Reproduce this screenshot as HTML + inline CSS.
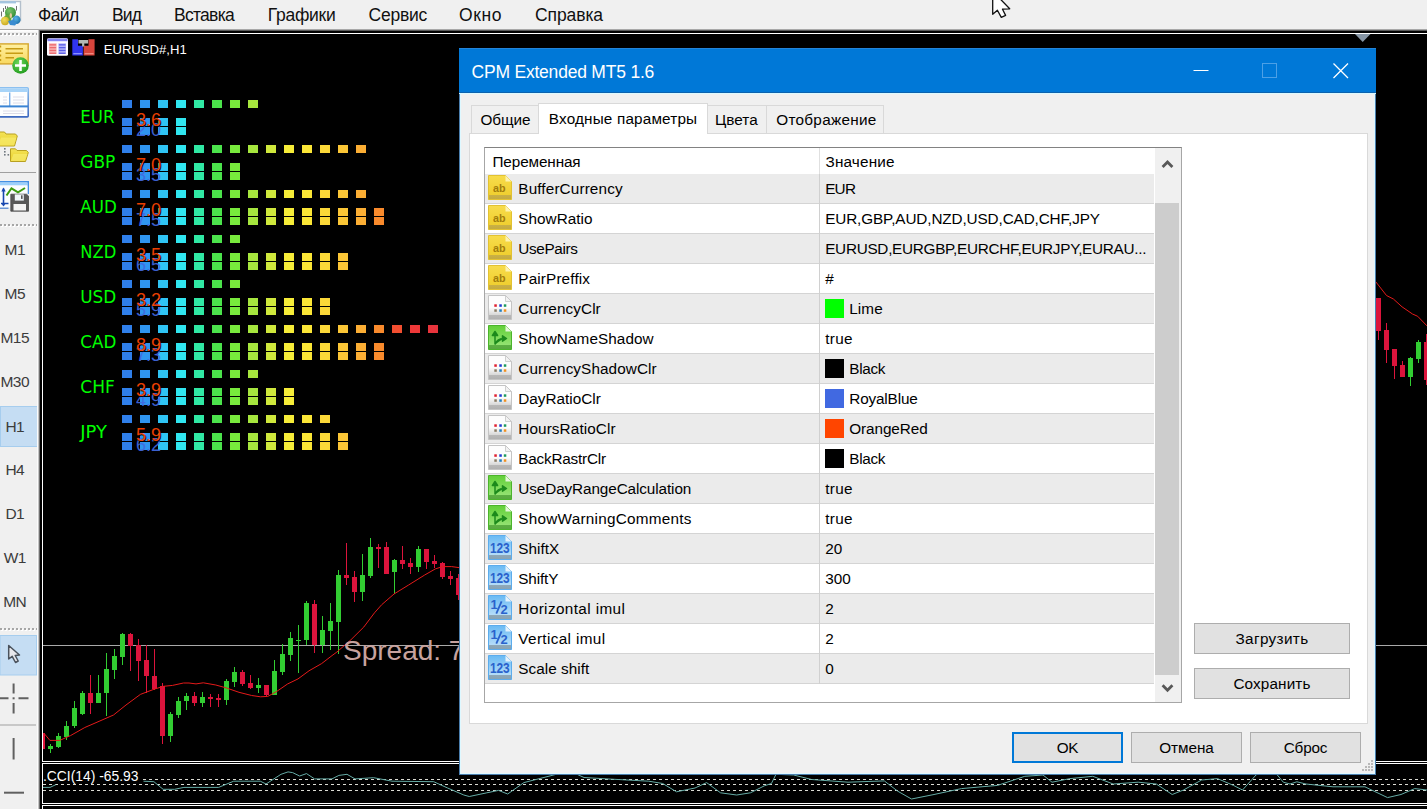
<!DOCTYPE html>
<html lang="ru"><head><meta charset="utf-8"><title>CPM Extended MT5 1.6</title>
<style>
html,body{margin:0;padding:0}
body{width:1427px;height:809px;overflow:hidden;background:#000;position:relative;font-family:"Liberation Sans",sans-serif;color:#000}
#chart{position:absolute;left:0;top:0;width:1427px;height:809px}
#chart text{font-family:"Liberation Sans",sans-serif}
#chart text.lv{font-size:18px;opacity:0.92}
#chart text.lb{font-family:"DejaVu Sans Condensed","DejaVu Sans",sans-serif;font-size:17.8px}
#menubar{position:absolute;left:0;top:0;width:1427px;height:29px;background:#f0f0f0;border-bottom:1px solid #a8a8a8}
#menubar:after{content:"";position:absolute;left:40px;right:0;top:30px;height:1px;background:#5a5a5a}
.mi{position:absolute;top:0;height:29px;line-height:30.5px;font-size:17.5px;color:#111;white-space:nowrap}
#appicon{position:absolute;left:0;top:0}
#cursor{position:absolute;left:985px;top:0}
#ltb{position:absolute;left:0;top:30px;width:38px;height:779px;background:#f0f0f0;border-right:1px solid #c4c4c4;box-shadow:1px 0 0 #6e6e6e}
#ltb:before{content:"";position:absolute;left:0;top:0;width:38px;height:2px;background:linear-gradient(#fff,#f8f8f8)}
#ltb:after{content:"";position:absolute;left:37px;top:0;width:1px;height:779px;background:#fbfbfb}
.tf{position:absolute;left:0;width:29px;height:42px;line-height:42px;font-size:15.5px;color:#3c3c3c;white-space:nowrap;letter-spacing:-0.6px}
.tf span{display:block;width:29.5px;text-align:center}
.tf.sel{width:36px;height:39px;line-height:39px;margin-top:1px;background:#c5ddf3;border:1px solid #a6cdee}
.tf.sel span{margin-left:-1px}
.grip{position:absolute;left:0;width:38px;height:3px;background:linear-gradient(#0000 0 0),repeating-linear-gradient(90deg,#a6a6a6 0 2px,transparent 2px 4px) 0 0/38px 2px no-repeat,repeating-linear-gradient(90deg,transparent 0 1px,#fff 1px 3px,transparent 3px 4px) 0 1px/38px 2px no-repeat}
.sep{position:absolute;left:0;width:36px;height:1px;background:#a0a0a0}
.lic{position:absolute;left:0}
#dlg{position:absolute;left:459px;top:48px;width:917px;height:727px;background:#f0f0f0;box-shadow:inset 0 0 0 1px #4a7eae,inset 0 0 0 2px #def8ff}
#ttl{position:absolute;left:0;top:0;width:917px;height:44px;background:#0078d7;border-bottom:1px solid #0d62ae;box-shadow:0 1px 0 #dcfaff,inset 0 1px 0 #2484da;color:#fff;font-size:17.5px;line-height:49px;white-space:nowrap}
#ttl span{position:absolute;left:12.5px;top:0}
#tbtn{position:absolute;left:734px;top:0}
#panel{position:absolute;left:10px;top:85px;width:897px;height:589px;background:#fff;border:1px solid #d9d9d9}
.tab{position:absolute;background:#f0f0f0;border:1px solid #d9d9d9;border-bottom:none;box-sizing:border-box;font-size:15.3px;white-space:nowrap}
.tab span{position:absolute;top:0;line-height:28px}
.tab.sel{background:#fff;z-index:2}
.tab.sel span{line-height:30px}
#list{position:absolute;left:25px;top:99px;width:696px;height:554px;background:#fff;border:1px solid #a6a6a6;border-top-color:#828282;font-size:15.3px;overflow:hidden}
.hd{position:relative;height:26px;line-height:27px;white-space:nowrap}
.hd .h1{position:absolute;left:7.5px}
.hd .h2{position:absolute;left:340.5px}
.hd:after{content:"";position:absolute;left:334px;top:0;width:1px;height:26px;background:#e0e0e0}
.row{position:relative;height:29px;width:668.5px;border-bottom:1px solid #d4d4d4;line-height:30.6px;white-space:nowrap;background:#fff}
.row.g{background:#ebebeb}
.row:after{content:"";position:absolute;left:334px;top:0;width:1px;height:30px;background:#d0d0d0}
.row svg{position:absolute;left:3px;top:1px}
.row svg text{font-family:"Liberation Sans",sans-serif}
.row .n{position:absolute;left:33.3px;top:0}
.row .v{position:absolute;left:340.2px;top:0}
.row .v.c{left:364.3px}
.sw{position:absolute;left:340.2px;top:5.3px;width:18.6px;height:18.6px;display:block}
#sb{position:absolute;left:670px;top:0;width:26px;height:554px;background:#f0f0f0}
#thumb{position:absolute;left:0;top:55px;width:24px;height:472px;background:#cdcdcd}
.btn{position:absolute;box-sizing:border-box;background:#e1e1e1;border:1px solid #adadad;font-size:15.3px;text-align:center;white-space:nowrap}
.btn span{display:block;line-height:29px}
.btn.def{border:2px solid #0078d7}
.btn.def span{line-height:27px}
#grip{position:absolute;left:903px;top:712px}
</style></head>
<body>
<svg width="0" height="0" style="position:absolute"><defs>
<linearGradient id="gAb" x1="0" y1="0" x2="0" y2="1"><stop offset="0" stop-color="#f7dc4c"/><stop offset="0.8" stop-color="#f0cf30"/><stop offset="0.82" stop-color="#c9b045"/><stop offset="1" stop-color="#c4aa40"/></linearGradient>
<linearGradient id="gC" x1="0" y1="0" x2="0" y2="1"><stop offset="0.5" stop-color="#fdfdfd"/><stop offset="0.8" stop-color="#d8d8d8"/><stop offset="0.82" stop-color="#b8b8b8"/><stop offset="1" stop-color="#b0b0b0"/></linearGradient>
<linearGradient id="gBo" x1="0" y1="0" x2="0" y2="1"><stop offset="0" stop-color="#62d038"/><stop offset="0.8" stop-color="#92e270"/><stop offset="0.82" stop-color="#5cb043"/><stop offset="1" stop-color="#58a840"/></linearGradient>
<linearGradient id="gI" x1="0" y1="0" x2="0" y2="1"><stop offset="0" stop-color="#68baf4"/><stop offset="0.8" stop-color="#b4dcf8"/><stop offset="0.82" stop-color="#8ea8b8"/><stop offset="1" stop-color="#88a2b2"/></linearGradient>
</defs></svg>
<svg id="chart" width="1427" height="809" viewBox="0 0 1427 809"><rect x="40" y="31" width="1387" height="778" fill="#000"/><g shape-rendering="crispEdges" fill="#fff"><rect x="42" y="33" width="1385" height="1"/><rect x="42" y="33" width="1" height="729"/><rect x="42" y="761" width="1385" height="1"/><rect x="42" y="763" width="1385" height="1"/><rect x="42" y="763" width="1" height="41"/><rect x="42" y="803" width="1385" height="1"/><rect x="42" y="805" width="1385" height="1"/><rect x="42" y="805" width="1" height="4"/></g><rect x="43" y="645" width="1384" height="1" fill="#a9a9a9" shape-rendering="crispEdges"/><path d="M1355 34H1370.5L1362.7 42Z" fill="#8796a5"/><g>
<rect x="47" y="38.3" width="21" height="17.5" rx="1.5" fill="#fdfbff"/>
<rect x="47.5" y="38.6" width="20" height="2.6" fill="#8484f2"/>
<rect x="49" y="43.3" width="7.6" height="10.7" fill="#f9b4b4"/><rect x="58.4" y="43.3" width="7.6" height="10.7" fill="#b6b6fa"/>
<g fill="#ec6a6e"><rect x="49.5" y="44.2" width="6.6" height="1.3"/><rect x="49.5" y="47" width="6.6" height="1.3"/><rect x="49.5" y="49.8" width="6.6" height="1.3"/><rect x="49.5" y="52.6" width="6.6" height="1.3"/></g>
<g fill="#5a5ee6"><rect x="58.9" y="44.2" width="6.6" height="1.3"/><rect x="58.9" y="47" width="6.6" height="1.3"/><rect x="58.9" y="49.8" width="6.6" height="1.3"/><rect x="58.9" y="52.6" width="6.6" height="1.3"/></g>
<path d="M72.3 39.200h5.700v6.600h4.900v9.800h-10.600z" fill="#3034ee"/>
<path d="M83.6 45.800h4.900v-6.600h6.100v16.400h-11z" fill="#d8453c"/>
<path d="M78.5 40h9.600v3.400h-3.800v3h-2.200v-3h-3.600z" fill="#b4b8b4"/>
<rect x="73.3" y="53" width="8.6" height="1.3" fill="#8a90ff"/><rect x="84.6" y="53" width="9" height="1.3" fill="#f08a80"/>
</g><text x="103.7" y="54" font-size="13" fill="#fff" textLength="83" lengthAdjust="spacingAndGlyphs">EURUSD#,H1</text><g shape-rendering="crispEdges"><rect x="122" y="100" width="10" height="8" fill="#2f7fea"/><rect x="140" y="100" width="10" height="8" fill="#2f95f0"/><rect x="158" y="100" width="10" height="8" fill="#2fc4f4"/><rect x="176" y="100" width="10" height="8" fill="#30e6f0"/><rect x="194" y="100" width="10" height="8" fill="#30e8a4"/><rect x="212" y="100" width="10" height="8" fill="#4be34b"/><rect x="230" y="100" width="10" height="8" fill="#78ea3c"/><rect x="248" y="100" width="10" height="8" fill="#a6e63e"/><rect x="122" y="118" width="10" height="8" fill="#2f7fea"/><rect x="122" y="127" width="10" height="8" fill="#2f7fea"/><rect x="140" y="118" width="10" height="8" fill="#2f95f0"/><rect x="140" y="127" width="10" height="8" fill="#2f95f0"/><rect x="158" y="118" width="10" height="8" fill="#2fc4f4"/><rect x="158" y="127" width="10" height="8" fill="#2fc4f4"/><rect x="176" y="118" width="10" height="8" fill="#30e6f0"/><rect x="176" y="127" width="10" height="8" fill="#30e6f0"/><rect x="122" y="145" width="10" height="8" fill="#2f7fea"/><rect x="140" y="145" width="10" height="8" fill="#2f95f0"/><rect x="158" y="145" width="10" height="8" fill="#2fc4f4"/><rect x="176" y="145" width="10" height="8" fill="#30e6f0"/><rect x="194" y="145" width="10" height="8" fill="#30e8a4"/><rect x="212" y="145" width="10" height="8" fill="#4be34b"/><rect x="230" y="145" width="10" height="8" fill="#78ea3c"/><rect x="248" y="145" width="10" height="8" fill="#a6e63e"/><rect x="266" y="145" width="10" height="8" fill="#cfe83c"/><rect x="284" y="145" width="10" height="8" fill="#f6ec38"/><rect x="302" y="145" width="10" height="8" fill="#fbe636"/><rect x="320" y="145" width="10" height="8" fill="#fbd838"/><rect x="338" y="145" width="10" height="8" fill="#fbc636"/><rect x="356" y="145" width="10" height="8" fill="#fbae34"/><rect x="122" y="163" width="10" height="8" fill="#2f7fea"/><rect x="122" y="172" width="10" height="8" fill="#2f7fea"/><rect x="140" y="163" width="10" height="8" fill="#2f95f0"/><rect x="140" y="172" width="10" height="8" fill="#2f95f0"/><rect x="158" y="163" width="10" height="8" fill="#2fc4f4"/><rect x="158" y="172" width="10" height="8" fill="#2fc4f4"/><rect x="176" y="163" width="10" height="8" fill="#30e6f0"/><rect x="176" y="172" width="10" height="8" fill="#30e6f0"/><rect x="194" y="163" width="10" height="8" fill="#30e8a4"/><rect x="194" y="172" width="10" height="8" fill="#30e8a4"/><rect x="212" y="163" width="10" height="8" fill="#4be34b"/><rect x="212" y="172" width="10" height="8" fill="#4be34b"/><rect x="230" y="163" width="10" height="8" fill="#78ea3c"/><rect x="230" y="172" width="10" height="8" fill="#78ea3c"/><rect x="122" y="190" width="10" height="8" fill="#2f7fea"/><rect x="140" y="190" width="10" height="8" fill="#2f95f0"/><rect x="158" y="190" width="10" height="8" fill="#2fc4f4"/><rect x="176" y="190" width="10" height="8" fill="#30e6f0"/><rect x="194" y="190" width="10" height="8" fill="#30e8a4"/><rect x="212" y="190" width="10" height="8" fill="#4be34b"/><rect x="230" y="190" width="10" height="8" fill="#78ea3c"/><rect x="248" y="190" width="10" height="8" fill="#a6e63e"/><rect x="266" y="190" width="10" height="8" fill="#cfe83c"/><rect x="284" y="190" width="10" height="8" fill="#f6ec38"/><rect x="302" y="190" width="10" height="8" fill="#fbe636"/><rect x="320" y="190" width="10" height="8" fill="#fbd838"/><rect x="338" y="190" width="10" height="8" fill="#fbc636"/><rect x="356" y="190" width="10" height="8" fill="#fbae34"/><rect x="122" y="208" width="10" height="8" fill="#2f7fea"/><rect x="122" y="217" width="10" height="8" fill="#2f7fea"/><rect x="140" y="208" width="10" height="8" fill="#2f95f0"/><rect x="140" y="217" width="10" height="8" fill="#2f95f0"/><rect x="158" y="208" width="10" height="8" fill="#2fc4f4"/><rect x="158" y="217" width="10" height="8" fill="#2fc4f4"/><rect x="176" y="208" width="10" height="8" fill="#30e6f0"/><rect x="176" y="217" width="10" height="8" fill="#30e6f0"/><rect x="194" y="208" width="10" height="8" fill="#30e8a4"/><rect x="194" y="217" width="10" height="8" fill="#30e8a4"/><rect x="212" y="208" width="10" height="8" fill="#4be34b"/><rect x="212" y="217" width="10" height="8" fill="#4be34b"/><rect x="230" y="208" width="10" height="8" fill="#78ea3c"/><rect x="230" y="217" width="10" height="8" fill="#78ea3c"/><rect x="248" y="208" width="10" height="8" fill="#a6e63e"/><rect x="248" y="217" width="10" height="8" fill="#a6e63e"/><rect x="266" y="208" width="10" height="8" fill="#cfe83c"/><rect x="266" y="217" width="10" height="8" fill="#cfe83c"/><rect x="284" y="208" width="10" height="8" fill="#f6ec38"/><rect x="284" y="217" width="10" height="8" fill="#f6ec38"/><rect x="302" y="208" width="10" height="8" fill="#fbe636"/><rect x="302" y="217" width="10" height="8" fill="#fbe636"/><rect x="320" y="208" width="10" height="8" fill="#fbd838"/><rect x="320" y="217" width="10" height="8" fill="#fbd838"/><rect x="338" y="208" width="10" height="8" fill="#fbc636"/><rect x="338" y="217" width="10" height="8" fill="#fbc636"/><rect x="356" y="208" width="10" height="8" fill="#fbae34"/><rect x="356" y="217" width="10" height="8" fill="#fbae34"/><rect x="374" y="208" width="10" height="8" fill="#f98a2c"/><rect x="374" y="217" width="10" height="8" fill="#f98a2c"/><rect x="122" y="235" width="10" height="8" fill="#2f7fea"/><rect x="140" y="235" width="10" height="8" fill="#2f95f0"/><rect x="158" y="235" width="10" height="8" fill="#2fc4f4"/><rect x="176" y="235" width="10" height="8" fill="#30e6f0"/><rect x="194" y="235" width="10" height="8" fill="#30e8a4"/><rect x="212" y="235" width="10" height="8" fill="#4be34b"/><rect x="230" y="235" width="10" height="8" fill="#78ea3c"/><rect x="122" y="253" width="10" height="8" fill="#2f7fea"/><rect x="122" y="262" width="10" height="8" fill="#2f7fea"/><rect x="140" y="253" width="10" height="8" fill="#2f95f0"/><rect x="140" y="262" width="10" height="8" fill="#2f95f0"/><rect x="158" y="253" width="10" height="8" fill="#2fc4f4"/><rect x="158" y="262" width="10" height="8" fill="#2fc4f4"/><rect x="176" y="253" width="10" height="8" fill="#30e6f0"/><rect x="176" y="262" width="10" height="8" fill="#30e6f0"/><rect x="194" y="253" width="10" height="8" fill="#30e8a4"/><rect x="194" y="262" width="10" height="8" fill="#30e8a4"/><rect x="212" y="253" width="10" height="8" fill="#4be34b"/><rect x="212" y="262" width="10" height="8" fill="#4be34b"/><rect x="230" y="253" width="10" height="8" fill="#78ea3c"/><rect x="230" y="262" width="10" height="8" fill="#78ea3c"/><rect x="248" y="253" width="10" height="8" fill="#a6e63e"/><rect x="248" y="262" width="10" height="8" fill="#a6e63e"/><rect x="266" y="253" width="10" height="8" fill="#cfe83c"/><rect x="266" y="262" width="10" height="8" fill="#cfe83c"/><rect x="284" y="253" width="10" height="8" fill="#f6ec38"/><rect x="284" y="262" width="10" height="8" fill="#f6ec38"/><rect x="302" y="253" width="10" height="8" fill="#fbe636"/><rect x="302" y="262" width="10" height="8" fill="#fbe636"/><rect x="320" y="253" width="10" height="8" fill="#fbd838"/><rect x="320" y="262" width="10" height="8" fill="#fbd838"/><rect x="338" y="253" width="10" height="8" fill="#fbc636"/><rect x="338" y="262" width="10" height="8" fill="#fbc636"/><rect x="122" y="280" width="10" height="8" fill="#2f7fea"/><rect x="140" y="280" width="10" height="8" fill="#2f95f0"/><rect x="158" y="280" width="10" height="8" fill="#2fc4f4"/><rect x="176" y="280" width="10" height="8" fill="#30e6f0"/><rect x="194" y="280" width="10" height="8" fill="#30e8a4"/><rect x="212" y="280" width="10" height="8" fill="#4be34b"/><rect x="230" y="280" width="10" height="8" fill="#78ea3c"/><rect x="122" y="298" width="10" height="8" fill="#2f7fea"/><rect x="122" y="307" width="10" height="8" fill="#2f7fea"/><rect x="140" y="298" width="10" height="8" fill="#2f95f0"/><rect x="140" y="307" width="10" height="8" fill="#2f95f0"/><rect x="158" y="298" width="10" height="8" fill="#2fc4f4"/><rect x="158" y="307" width="10" height="8" fill="#2fc4f4"/><rect x="176" y="298" width="10" height="8" fill="#30e6f0"/><rect x="176" y="307" width="10" height="8" fill="#30e6f0"/><rect x="194" y="298" width="10" height="8" fill="#30e8a4"/><rect x="194" y="307" width="10" height="8" fill="#30e8a4"/><rect x="212" y="298" width="10" height="8" fill="#4be34b"/><rect x="212" y="307" width="10" height="8" fill="#4be34b"/><rect x="230" y="298" width="10" height="8" fill="#78ea3c"/><rect x="230" y="307" width="10" height="8" fill="#78ea3c"/><rect x="248" y="298" width="10" height="8" fill="#a6e63e"/><rect x="248" y="307" width="10" height="8" fill="#a6e63e"/><rect x="266" y="298" width="10" height="8" fill="#cfe83c"/><rect x="266" y="307" width="10" height="8" fill="#cfe83c"/><rect x="284" y="298" width="10" height="8" fill="#f6ec38"/><rect x="284" y="307" width="10" height="8" fill="#f6ec38"/><rect x="302" y="298" width="10" height="8" fill="#fbe636"/><rect x="302" y="307" width="10" height="8" fill="#fbe636"/><rect x="320" y="298" width="10" height="8" fill="#fbd838"/><rect x="320" y="307" width="10" height="8" fill="#fbd838"/><rect x="122" y="325" width="10" height="8" fill="#2f7fea"/><rect x="140" y="325" width="10" height="8" fill="#2f95f0"/><rect x="158" y="325" width="10" height="8" fill="#2fc4f4"/><rect x="176" y="325" width="10" height="8" fill="#30e6f0"/><rect x="194" y="325" width="10" height="8" fill="#30e8a4"/><rect x="212" y="325" width="10" height="8" fill="#4be34b"/><rect x="230" y="325" width="10" height="8" fill="#78ea3c"/><rect x="248" y="325" width="10" height="8" fill="#a6e63e"/><rect x="266" y="325" width="10" height="8" fill="#cfe83c"/><rect x="284" y="325" width="10" height="8" fill="#f6ec38"/><rect x="302" y="325" width="10" height="8" fill="#fbe636"/><rect x="320" y="325" width="10" height="8" fill="#fbd838"/><rect x="338" y="325" width="10" height="8" fill="#fbc636"/><rect x="356" y="325" width="10" height="8" fill="#fbae34"/><rect x="374" y="325" width="10" height="8" fill="#f98a2c"/><rect x="392" y="325" width="10" height="8" fill="#f24e30"/><rect x="410" y="325" width="10" height="8" fill="#ee3838"/><rect x="428" y="325" width="10" height="8" fill="#e8343c"/><rect x="122" y="343" width="10" height="8" fill="#2f7fea"/><rect x="122" y="352" width="10" height="8" fill="#2f7fea"/><rect x="140" y="343" width="10" height="8" fill="#2f95f0"/><rect x="140" y="352" width="10" height="8" fill="#2f95f0"/><rect x="158" y="343" width="10" height="8" fill="#2fc4f4"/><rect x="158" y="352" width="10" height="8" fill="#2fc4f4"/><rect x="176" y="343" width="10" height="8" fill="#30e6f0"/><rect x="176" y="352" width="10" height="8" fill="#30e6f0"/><rect x="194" y="343" width="10" height="8" fill="#30e8a4"/><rect x="194" y="352" width="10" height="8" fill="#30e8a4"/><rect x="212" y="343" width="10" height="8" fill="#4be34b"/><rect x="212" y="352" width="10" height="8" fill="#4be34b"/><rect x="230" y="343" width="10" height="8" fill="#78ea3c"/><rect x="230" y="352" width="10" height="8" fill="#78ea3c"/><rect x="248" y="343" width="10" height="8" fill="#a6e63e"/><rect x="248" y="352" width="10" height="8" fill="#a6e63e"/><rect x="266" y="343" width="10" height="8" fill="#cfe83c"/><rect x="266" y="352" width="10" height="8" fill="#cfe83c"/><rect x="284" y="343" width="10" height="8" fill="#f6ec38"/><rect x="284" y="352" width="10" height="8" fill="#f6ec38"/><rect x="302" y="343" width="10" height="8" fill="#fbe636"/><rect x="302" y="352" width="10" height="8" fill="#fbe636"/><rect x="320" y="343" width="10" height="8" fill="#fbd838"/><rect x="320" y="352" width="10" height="8" fill="#fbd838"/><rect x="338" y="343" width="10" height="8" fill="#fbc636"/><rect x="338" y="352" width="10" height="8" fill="#fbc636"/><rect x="356" y="343" width="10" height="8" fill="#fbae34"/><rect x="356" y="352" width="10" height="8" fill="#fbae34"/><rect x="374" y="343" width="10" height="8" fill="#f98a2c"/><rect x="374" y="352" width="10" height="8" fill="#f98a2c"/><rect x="122" y="370" width="10" height="8" fill="#2f7fea"/><rect x="140" y="370" width="10" height="8" fill="#2f95f0"/><rect x="158" y="370" width="10" height="8" fill="#2fc4f4"/><rect x="176" y="370" width="10" height="8" fill="#30e6f0"/><rect x="194" y="370" width="10" height="8" fill="#30e8a4"/><rect x="212" y="370" width="10" height="8" fill="#4be34b"/><rect x="230" y="370" width="10" height="8" fill="#78ea3c"/><rect x="248" y="370" width="10" height="8" fill="#a6e63e"/><rect x="122" y="388" width="10" height="8" fill="#2f7fea"/><rect x="122" y="397" width="10" height="8" fill="#2f7fea"/><rect x="140" y="388" width="10" height="8" fill="#2f95f0"/><rect x="140" y="397" width="10" height="8" fill="#2f95f0"/><rect x="158" y="388" width="10" height="8" fill="#2fc4f4"/><rect x="158" y="397" width="10" height="8" fill="#2fc4f4"/><rect x="176" y="388" width="10" height="8" fill="#30e6f0"/><rect x="176" y="397" width="10" height="8" fill="#30e6f0"/><rect x="194" y="388" width="10" height="8" fill="#30e8a4"/><rect x="194" y="397" width="10" height="8" fill="#30e8a4"/><rect x="212" y="388" width="10" height="8" fill="#4be34b"/><rect x="212" y="397" width="10" height="8" fill="#4be34b"/><rect x="230" y="388" width="10" height="8" fill="#78ea3c"/><rect x="230" y="397" width="10" height="8" fill="#78ea3c"/><rect x="248" y="388" width="10" height="8" fill="#a6e63e"/><rect x="248" y="397" width="10" height="8" fill="#a6e63e"/><rect x="266" y="388" width="10" height="8" fill="#cfe83c"/><rect x="266" y="397" width="10" height="8" fill="#cfe83c"/><rect x="284" y="388" width="10" height="8" fill="#f6ec38"/><rect x="284" y="397" width="10" height="8" fill="#f6ec38"/><rect x="122" y="415" width="10" height="8" fill="#2f7fea"/><rect x="140" y="415" width="10" height="8" fill="#2f95f0"/><rect x="158" y="415" width="10" height="8" fill="#2fc4f4"/><rect x="176" y="415" width="10" height="8" fill="#30e6f0"/><rect x="194" y="415" width="10" height="8" fill="#30e8a4"/><rect x="212" y="415" width="10" height="8" fill="#4be34b"/><rect x="230" y="415" width="10" height="8" fill="#78ea3c"/><rect x="248" y="415" width="10" height="8" fill="#a6e63e"/><rect x="266" y="415" width="10" height="8" fill="#cfe83c"/><rect x="284" y="415" width="10" height="8" fill="#f6ec38"/><rect x="302" y="415" width="10" height="8" fill="#fbe636"/><rect x="320" y="415" width="10" height="8" fill="#fbd838"/><rect x="122" y="433" width="10" height="8" fill="#2f7fea"/><rect x="122" y="442" width="10" height="8" fill="#2f7fea"/><rect x="140" y="433" width="10" height="8" fill="#2f95f0"/><rect x="140" y="442" width="10" height="8" fill="#2f95f0"/><rect x="158" y="433" width="10" height="8" fill="#2fc4f4"/><rect x="158" y="442" width="10" height="8" fill="#2fc4f4"/><rect x="176" y="433" width="10" height="8" fill="#30e6f0"/><rect x="176" y="442" width="10" height="8" fill="#30e6f0"/><rect x="194" y="433" width="10" height="8" fill="#30e8a4"/><rect x="194" y="442" width="10" height="8" fill="#30e8a4"/><rect x="212" y="433" width="10" height="8" fill="#4be34b"/><rect x="212" y="442" width="10" height="8" fill="#4be34b"/><rect x="230" y="433" width="10" height="8" fill="#78ea3c"/><rect x="230" y="442" width="10" height="8" fill="#78ea3c"/><rect x="248" y="433" width="10" height="8" fill="#a6e63e"/><rect x="248" y="442" width="10" height="8" fill="#a6e63e"/><rect x="266" y="433" width="10" height="8" fill="#cfe83c"/><rect x="266" y="442" width="10" height="8" fill="#cfe83c"/><rect x="284" y="433" width="10" height="8" fill="#f6ec38"/><rect x="284" y="442" width="10" height="8" fill="#f6ec38"/><rect x="302" y="433" width="10" height="8" fill="#fbe636"/><rect x="302" y="442" width="10" height="8" fill="#fbe636"/><rect x="320" y="433" width="10" height="8" fill="#fbd838"/><rect x="320" y="442" width="10" height="8" fill="#fbd838"/><rect x="338" y="433" width="10" height="8" fill="#fbc636"/><rect x="338" y="442" width="10" height="8" fill="#fbc636"/></g><g font-family="'DejaVu Sans Condensed','DejaVu Sans',sans-serif" font-size="18"><text class="lb" x="80.3" y="123" fill="#00ff00" textLength="34.2" lengthAdjust="spacingAndGlyphs">EUR</text><text class="lv" x="136" y="135.5" fill="#4169e1">2.0</text><text class="lv" x="137" y="127" fill="#000">3.6</text><text class="lv" x="136" y="126" fill="#ff4500">3.6</text><text class="lb" x="80.3" y="168" fill="#00ff00" textLength="35" lengthAdjust="spacingAndGlyphs">GBP</text><text class="lv" x="136" y="180.5" fill="#4169e1">3.5</text><text class="lv" x="137" y="172" fill="#000">7.0</text><text class="lv" x="136" y="171" fill="#ff4500">7.0</text><text class="lb" x="80.3" y="213" fill="#00ff00" textLength="36.5" lengthAdjust="spacingAndGlyphs">AUD</text><text class="lv" x="136" y="225.5" fill="#4169e1">7.5</text><text class="lv" x="137" y="217" fill="#000">7.0</text><text class="lv" x="136" y="216" fill="#ff4500">7.0</text><text class="lb" x="80.3" y="258" fill="#00ff00" textLength="36" lengthAdjust="spacingAndGlyphs">NZD</text><text class="lv" x="136" y="270.5" fill="#4169e1">6.5</text><text class="lv" x="137" y="262" fill="#000">3.5</text><text class="lv" x="136" y="261" fill="#ff4500">3.5</text><text class="lb" x="80.3" y="303" fill="#00ff00" textLength="36" lengthAdjust="spacingAndGlyphs">USD</text><text class="lv" x="136" y="315.5" fill="#4169e1">5.9</text><text class="lv" x="137" y="307" fill="#000">3.2</text><text class="lv" x="136" y="306" fill="#ff4500">3.2</text><text class="lb" x="80.3" y="348" fill="#00ff00" textLength="36" lengthAdjust="spacingAndGlyphs">CAD</text><text class="lv" x="136" y="360.5" fill="#4169e1">7.3</text><text class="lv" x="137" y="352" fill="#000">8.9</text><text class="lv" x="136" y="351" fill="#ff4500">8.9</text><text class="lb" x="80.3" y="393" fill="#00ff00" textLength="34.5" lengthAdjust="spacingAndGlyphs">CHF</text><text class="lv" x="136" y="405.5" fill="#4169e1">4.9</text><text class="lv" x="137" y="397" fill="#000">3.9</text><text class="lv" x="136" y="396" fill="#ff4500">3.9</text><text class="lb" x="80.3" y="438" fill="#00ff00" textLength="26.5" lengthAdjust="spacingAndGlyphs">JPY</text><text class="lv" x="136" y="450.5" fill="#4169e1">6.2</text><text class="lv" x="137" y="442" fill="#000">5.9</text><text class="lv" x="136" y="441" fill="#ff4500">5.9</text></g><g shape-rendering="crispEdges"><rect x="43" y="733" width="2" height="16" fill="#dc143c"/><rect x="50" y="744" width="1" height="9" fill="#32cd32"/><rect x="48" y="746" width="5" height="3" fill="#32cd32"/><rect x="58" y="733" width="1" height="15" fill="#32cd32"/><rect x="56" y="736" width="5" height="11" fill="#32cd32"/><rect x="66" y="721" width="1" height="19" fill="#32cd32"/><rect x="64" y="726" width="5" height="11" fill="#32cd32"/><rect x="74" y="701" width="1" height="27" fill="#32cd32"/><rect x="72" y="708" width="5" height="18" fill="#32cd32"/><rect x="82" y="691" width="1" height="24" fill="#32cd32"/><rect x="80" y="693" width="5" height="21" fill="#32cd32"/><rect x="90" y="675" width="1" height="39" fill="#dc143c"/><rect x="88" y="693" width="5" height="10" fill="#dc143c"/><rect x="98" y="675" width="1" height="28" fill="#32cd32"/><rect x="96" y="693" width="5" height="10" fill="#32cd32"/><rect x="106" y="653" width="1" height="63" fill="#32cd32"/><rect x="104" y="669" width="5" height="24" fill="#32cd32"/><rect x="114" y="649" width="1" height="30" fill="#32cd32"/><rect x="112" y="656" width="5" height="14" fill="#32cd32"/><rect x="122" y="633" width="1" height="32" fill="#32cd32"/><rect x="120" y="634" width="5" height="23" fill="#32cd32"/><rect x="130" y="633" width="1" height="38" fill="#dc143c"/><rect x="128" y="634" width="5" height="12" fill="#dc143c"/><rect x="138" y="639" width="1" height="42" fill="#dc143c"/><rect x="136" y="645" width="5" height="16" fill="#dc143c"/><rect x="146" y="645" width="1" height="48" fill="#dc143c"/><rect x="144" y="660" width="5" height="16" fill="#dc143c"/><rect x="154" y="649" width="1" height="41" fill="#dc143c"/><rect x="152" y="676" width="5" height="13" fill="#dc143c"/><rect x="162" y="683" width="1" height="61" fill="#dc143c"/><rect x="160" y="686" width="5" height="50" fill="#dc143c"/><rect x="170" y="712" width="1" height="30" fill="#32cd32"/><rect x="168" y="714" width="5" height="22" fill="#32cd32"/><rect x="178" y="697" width="1" height="21" fill="#32cd32"/><rect x="176" y="701" width="5" height="14" fill="#32cd32"/><rect x="186" y="693" width="1" height="17" fill="#32cd32"/><rect x="184" y="696" width="5" height="5" fill="#32cd32"/><rect x="194" y="692" width="1" height="14" fill="#dc143c"/><rect x="192" y="696" width="5" height="7" fill="#dc143c"/><rect x="202" y="692" width="1" height="15" fill="#32cd32"/><rect x="200" y="697" width="5" height="6" fill="#32cd32"/><rect x="210" y="694" width="1" height="13" fill="#dc143c"/><rect x="208" y="697" width="5" height="2" fill="#dc143c"/><rect x="218" y="694" width="1" height="13" fill="#dc143c"/><rect x="216" y="698" width="5" height="2" fill="#dc143c"/><rect x="226" y="679" width="1" height="26" fill="#32cd32"/><rect x="224" y="681" width="5" height="19" fill="#32cd32"/><rect x="234" y="667" width="1" height="20" fill="#32cd32"/><rect x="232" y="672" width="5" height="10" fill="#32cd32"/><rect x="242" y="670" width="1" height="16" fill="#dc143c"/><rect x="240" y="672" width="5" height="12" fill="#dc143c"/><rect x="250" y="675" width="1" height="14" fill="#dc143c"/><rect x="248" y="683" width="5" height="5" fill="#dc143c"/><rect x="258" y="678" width="1" height="15" fill="#32cd32"/><rect x="256" y="685" width="5" height="3" fill="#32cd32"/><rect x="266" y="685" width="1" height="11" fill="#dc143c"/><rect x="264" y="685" width="5" height="10" fill="#dc143c"/><rect x="274" y="660" width="1" height="35" fill="#32cd32"/><rect x="272" y="671" width="5" height="24" fill="#32cd32"/><rect x="282" y="644" width="1" height="31" fill="#32cd32"/><rect x="280" y="654" width="5" height="18" fill="#32cd32"/><rect x="290" y="632" width="1" height="29" fill="#32cd32"/><rect x="288" y="638" width="5" height="17" fill="#32cd32"/><rect x="298" y="625" width="1" height="48" fill="#32cd32"/><rect x="296" y="640" width="5" height="1" fill="#32cd32"/><rect x="306" y="601" width="1" height="44" fill="#32cd32"/><rect x="304" y="603" width="5" height="37" fill="#32cd32"/><rect x="314" y="600" width="1" height="53" fill="#dc143c"/><rect x="312" y="604" width="5" height="41" fill="#dc143c"/><rect x="322" y="616" width="1" height="37" fill="#32cd32"/><rect x="320" y="630" width="5" height="15" fill="#32cd32"/><rect x="330" y="603" width="1" height="47" fill="#32cd32"/><rect x="328" y="621" width="5" height="10" fill="#32cd32"/><rect x="338" y="570" width="1" height="84" fill="#32cd32"/><rect x="336" y="575" width="5" height="47" fill="#32cd32"/><rect x="346" y="543" width="1" height="42" fill="#dc143c"/><rect x="344" y="575" width="5" height="3" fill="#dc143c"/><rect x="354" y="571" width="1" height="31" fill="#dc143c"/><rect x="352" y="577" width="5" height="15" fill="#dc143c"/><rect x="362" y="554" width="1" height="47" fill="#32cd32"/><rect x="360" y="575" width="5" height="17" fill="#32cd32"/><rect x="370" y="538" width="1" height="40" fill="#32cd32"/><rect x="368" y="547" width="5" height="29" fill="#32cd32"/><rect x="378" y="544" width="1" height="24" fill="#dc143c"/><rect x="376" y="547" width="5" height="2" fill="#dc143c"/><rect x="386" y="542" width="1" height="32" fill="#dc143c"/><rect x="384" y="547" width="5" height="27" fill="#dc143c"/><rect x="394" y="559" width="1" height="35" fill="#32cd32"/><rect x="392" y="560" width="5" height="12" fill="#32cd32"/><rect x="402" y="546" width="1" height="23" fill="#dc143c"/><rect x="400" y="560" width="5" height="4" fill="#dc143c"/><rect x="410" y="558" width="1" height="16" fill="#dc143c"/><rect x="408" y="563" width="5" height="4" fill="#dc143c"/><rect x="418" y="546" width="1" height="26" fill="#32cd32"/><rect x="416" y="549" width="5" height="18" fill="#32cd32"/><rect x="426" y="549" width="1" height="20" fill="#dc143c"/><rect x="424" y="549" width="5" height="13" fill="#dc143c"/><rect x="434" y="555" width="1" height="13" fill="#dc143c"/><rect x="432" y="561" width="5" height="3" fill="#dc143c"/><rect x="442" y="562" width="1" height="17" fill="#dc143c"/><rect x="440" y="563" width="5" height="14" fill="#dc143c"/><rect x="450" y="571" width="1" height="14" fill="#dc143c"/><rect x="448" y="576" width="5" height="3" fill="#dc143c"/><rect x="458" y="574" width="1" height="26" fill="#dc143c"/><rect x="456" y="578" width="5" height="17" fill="#dc143c"/><rect x="1378" y="298" width="1" height="42" fill="#dc143c"/><rect x="1376" y="298" width="5" height="33" fill="#dc143c"/><rect x="1386" y="323" width="1" height="40" fill="#dc143c"/><rect x="1384" y="330" width="5" height="20" fill="#dc143c"/><rect x="1394" y="349" width="1" height="30" fill="#dc143c"/><rect x="1392" y="349" width="5" height="17" fill="#dc143c"/><rect x="1402" y="361" width="1" height="16" fill="#dc143c"/><rect x="1400" y="365" width="5" height="12" fill="#dc143c"/><rect x="1410" y="357" width="1" height="29" fill="#32cd32"/><rect x="1408" y="358" width="5" height="19" fill="#32cd32"/><rect x="1418" y="340" width="1" height="23" fill="#32cd32"/><rect x="1416" y="342" width="5" height="17" fill="#32cd32"/><rect x="1426" y="334" width="1" height="51" fill="#dc143c"/><rect x="1424" y="342" width="5" height="38" fill="#dc143c"/></g><polyline fill="none" stroke="#e41a1a" stroke-width="1" points="44,733.3 49.9,740.4 59.7,740.4 70.5,735.6 84.8,727.5 99.1,721.3 113.5,715 126,705 140.4,694.4 154.7,689 163.7,686.3 172.6,685.4 183.4,683 189,683 196,683.9 203.3,682.8 215.8,685 226.6,688 239,692.3 251.7,695.5 260.6,696.8 267.8,696.4 276.8,691.4 287.5,684 298,678.9 309,670.8 321.6,663.6 332,655.6 336.9,652 351,639.7 363.8,627 374.5,612.8 381.7,604.7 394,594 408.6,585 424.7,575 435.4,568.9 442.6,566.6 451.6,566.6 459,567.6"/><polyline fill="none" stroke="#e41a1a" stroke-width="1" points="1375.7,281.7 1386.5,295.5 1393.4,299 1402,306.8 1412.5,314 1417.7,316.3 1427,325.9"/><text x="343" y="659.5" font-size="28" fill="#c7a29e">Spread: 7</text><text x="43" y="781" font-size="14" fill="#fff" textLength="95.5" lengthAdjust="spacingAndGlyphs">.CCI(14) -65.93</text><g stroke="#dcdcd4" stroke-width="1" stroke-dasharray="3 3" shape-rendering="crispEdges"><path d="M143 779.500H1427"/><path d="M43 784.500H1427"/><path d="M43 790.500H1427"/></g><polyline fill="none" stroke="#66aca6" stroke-width="1" points="43,787.4 50,787.4 56,784.6"/><polyline fill="none" stroke="#66aca6" stroke-width="1" points="143.5,781.2 153.9,781.7 163.1,789.3 174.7,789.3 183.9,787.4 218.6,787.4 233.7,781.2 260.3,781.2 266,784 281,774.3 288,771.9 292.6,772.6 299.6,776 306.5,773.6 314.6,778.9 332,778.9 338.9,775.4 347,774.3 355,778.9 373.6,777.7 392,781.2 433.7,781.7 447.6,788 463.8,795 469.3,796.5 486.9,792.8 498.5,790.4 507.7,794 523.9,782.6 556.3,774.3 577,774.3 584,777.5 607,778.9 648.8,781.2 662.7,783.5 676.5,791.8 695,788 706.6,782.6 720.5,792.8 736.7,795 750.5,792.8 764.4,785.8 771.4,783.5 776,774.3 793.6,775 811.7,779.5 848,782.2 884.3,780.9 897.9,791.3 911.5,799 934,794.5 961.4,788.6 997.6,785.4 1024.8,776.3 1043,775 1052,782.2 1070,778.6 1092.8,776.3 1113.2,784 1138.2,782.2 1156.3,784 1172.2,794.5 1183.5,790 1201.6,780 1217.5,778.6 1233.4,785.4 1242.5,790 1256,775 1266,768 1276.5,774 1283.3,782.2 1290,784 1296.9,781.8 1306,784 1333,786.8 1364.9,786.8 1387.5,797.6 1401,794.5 1414.7,788.6 1427,790"/></svg>
<div id="menubar"><svg id="appicon" width="30" height="29" viewBox="0 0 30 29"><defs><radialGradient id="gG" cx="0.4" cy="0.35" r="0.7"><stop offset="0" stop-color="#7cc46a"/><stop offset="1" stop-color="#2f8a34"/></radialGradient><radialGradient id="gY" cx="0.4" cy="0.35" r="0.7"><stop offset="0" stop-color="#f2dc5a"/><stop offset="1" stop-color="#c8a820"/></radialGradient><radialGradient id="gB" cx="0.4" cy="0.35" r="0.7"><stop offset="0" stop-color="#58b4e8"/><stop offset="1" stop-color="#1c70a8"/></radialGradient></defs>
<rect x="-2" y="1.5" width="22.5" height="19" fill="#fcfdfe" stroke="#b4c0cc" stroke-width="1.4"/><rect x="-2" y="1.2" width="18" height="2.2" fill="#a4c4e0"/>
<g stroke="#606060" stroke-width="0.9"><path d="M1.5 11.5V16.5M3.5 8V12M5.5 6V9M7.5 6.5V8M16.5 6V10.5"/></g>
<ellipse cx="10.5" cy="12.5" rx="5.5" ry="5.5" fill="url(#gG)"/><path d="M4 17c2-3 6-3 8-1l-1 5-6 2z" fill="#68a838"/>
<ellipse cx="5" cy="21" rx="4" ry="4.2" fill="url(#gY)"/><ellipse cx="16.5" cy="19.8" rx="4" ry="4.3" fill="url(#gB)"/><path d="M8 21l5-1 4 3-2 2.5-5-0.5z" fill="#3a8cd0"/><ellipse cx="10.8" cy="15.5" rx="1.2" ry="2.5" fill="#e8c8a0"/>
</svg>
<span class="mi" style="left:38px;letter-spacing:-0.633px">Файл</span><span class="mi" style="left:112px;letter-spacing:-0.891px">Вид</span><span class="mi" style="left:174px;letter-spacing:-0.721px">Вставка</span><span class="mi" style="left:267.7px;letter-spacing:-0.254px">Графики</span><span class="mi" style="left:368.6px;letter-spacing:-0.256px">Сервис</span><span class="mi" style="left:459px;letter-spacing:0.582px">Окно</span><span class="mi" style="left:535px;letter-spacing:-0.094px">Справка</span></div>
<svg id="cursor" width="30" height="22" viewBox="985 0 30 22"><path d="M992.7 -8V14.3L997.4 10.2L1001.3 17.4L1005.6 15.4L1002.5 9.2L1009.7 8.8L993.5 -8Z" fill="#fff" stroke="#111" stroke-width="1.3" stroke-linejoin="round"/></svg>
<div id="ltb"><div class="grip" style="top:3px"></div>
<svg class="lic" style="top:0" width="38" height="779" viewBox="0 30 38 779">
<defs><linearGradient id="gN" x1="0" y1="0" x2="0" y2="1"><stop offset="0" stop-color="#fff0a0"/><stop offset="1" stop-color="#f8d860"/></linearGradient><radialGradient id="gP" cx="0.4" cy="0.35" r="0.7"><stop offset="0" stop-color="#6fd85a"/><stop offset="1" stop-color="#1f9a1c"/></radialGradient><linearGradient id="gW" x1="0" y1="0" x2="0" y2="1"><stop offset="0" stop-color="#8cc0f0"/><stop offset="1" stop-color="#3c68c0"/></linearGradient><linearGradient id="gF" x1="0" y1="0" x2="0" y2="1"><stop offset="0" stop-color="#f4e458"/><stop offset="1" stop-color="#e8cc28"/></linearGradient></defs>
<!-- new order note -->
<rect x="-2" y="43.9" width="30.2" height="20" fill="url(#gN)" stroke="#d4a62c" stroke-width="1.4"/>
<g stroke="#c79c14" stroke-width="1.6"><path d="M5.5 48.7H23M5.5 53.2H23M5.5 57.7H14"/></g>
<g fill="#c79c14"><rect x="0" y="45.5" width="1.2" height="2"/><rect x="0" y="50" width="1.2" height="2"/><rect x="0" y="54.5" width="1.2" height="2"/><rect x="0" y="59" width="1.2" height="2"/></g>
<circle cx="20.5" cy="65.5" r="8.3" fill="url(#gP)"/><path d="M20.5 60v11M15 65.5h11" stroke="#fff" stroke-width="2.6"/>
<!-- window icon -->
<rect x="-2" y="87.7" width="30.2" height="29.2" rx="1" fill="#fdfeff" stroke="url(#gW)" stroke-width="1.6"/>
<rect x="-2" y="88.5" width="29.5" height="3.5" fill="#a8d4f8"/>
<path d="M9.7 92.5V106" stroke="#7ab0e8" stroke-width="1.4"/><path d="M-2 106.4H28" stroke="#3a84d4" stroke-width="2"/>
<g stroke="#dcdce8" stroke-width="1"><path d="M3 97H7M3 100H7M3 103H7M13 97H24M13 100H24M13 103H24M3 111H24M3 113.5H24"/></g>
<!-- folders -->
<path d="M-2 132H4.5L6 134H15.5L17.3 136L14.5 146H-2Z" fill="url(#gF)" stroke="#b8a020" stroke-width="1"/>
<path d="M1 137.5H16.5L14 145.5H-2Z" fill="#f8ec70" opacity="0.7"/>
<path d="M10.5 148.8H15.5L17 150.5H26.5L28.3 152.5L25.5 161.5H10.5Z" fill="url(#gF)" stroke="#b8a020" stroke-width="1"/>
<path d="M13.5 154H27.5L25 161H10.8Z" fill="#f8ec70" opacity="0.7"/>
<g fill="#707880"><rect x="4" y="148" width="1.6" height="1.6"/><rect x="4" y="151" width="1.6" height="1.6"/><rect x="4" y="154" width="1.6" height="1.6"/><rect x="7.5" y="154" width="1.6" height="1.6"/></g>
<rect x="0" y="172" width="36" height="1" fill="#a0a0a0"/>
<!-- chart save -->
<path d="M-2 181.8H28.2V194" fill="none" stroke="#4490e4" stroke-width="1.6"/><path d="M-2 208H8.5" stroke="#4a80d0" stroke-width="1.6"/>
<rect x="-2" y="182.5" width="29.5" height="3" fill="#9cd0fc"/><rect x="-2" y="185.5" width="29.5" height="22" fill="#fbfdff"/>
<path d="M3.5 188.5V205.5M1 203.5H8.5" stroke="#1848b0" stroke-width="1.6" fill="none"/><path d="M1.3 191.5L3.5 187.5L5.7 191.5ZM1.8 204L3.5 206.5L5.2 204Z" fill="#1848b0"/>
<path d="M6.5 195.5L11.5 188.3L18 192.3L25 188" fill="none" stroke="#3c9c10" stroke-width="2"/>
<path d="M10.8 194.2H26.5L28.5 196V211.2H10.8Z" fill="#585858" stroke="#484848" stroke-width="0.8"/>
<rect x="14.8" y="194.4" width="9" height="6.2" fill="#f0f6fa"/><rect x="21" y="195.3" width="1.6" height="3.6" fill="#585858"/><rect x="13.5" y="204" width="12.5" height="6.5" fill="#f4f4f4"/>
<!-- tools -->
<rect x="0" y="635.5" width="36.5" height="39.5" fill="#c5ddf3" stroke="#a6cdee" stroke-width="1"/>
<path d="M8.7 645.5V659L12.2 656.3L15.5 662.5L18.2 661L15.2 655.5L19.5 655Z" fill="#e8e8ec" stroke="#4a525c" stroke-width="1.5" stroke-linejoin="round"/>
<g stroke="#606060" stroke-width="2" fill="none"><path d="M13.6 683.5V693.5M13.6 703V713.5M0 698.3H8.5M18.5 698.3H28.5"/></g><rect x="12.6" y="697.3" width="2" height="2" fill="#606060"/>
<rect x="0" y="724.5" width="36" height="1" fill="#a0a0a0"/>
<path d="M13.6 738V759.5" stroke="#606060" stroke-width="2"/><path d="M4 792.7H24" stroke="#606060" stroke-width="2"/>
</svg>
<div class="grip" style="top:194px"></div>
<div class="grip" style="top:598px"></div>
<div class="tf" style="top:199px"><span>M1</span></div><div class="tf" style="top:243px"><span>M5</span></div><div class="tf" style="top:287px"><span>M15</span></div><div class="tf" style="top:331px"><span>M30</span></div><div class="tf sel" style="top:375px"><span>H1</span></div><div class="tf" style="top:419px"><span>H4</span></div><div class="tf" style="top:463px"><span>D1</span></div><div class="tf" style="top:507px"><span>W1</span></div><div class="tf" style="top:551px"><span>MN</span></div></div>
<div id="dlg"><div id="ttl"><span style="letter-spacing:-0.208px">CPM Extended MT5 1.6</span><svg id="tbtn" width="180" height="44" viewBox="0 0 180 44"><path d="M0.5 22.5H15.5" stroke="#fff" stroke-width="1" fill="none"/><rect x="69.5" y="15.5" width="14" height="14" stroke="#4da0e6" fill="none"/><path d="M140.5 15.5L155 30M155 15.5L140.5 30" stroke="#fff" stroke-width="1.3" fill="none"/></svg></div>
<div id="panel"></div><div class="tab" style="left:12px;top:57px;width:68px;height:28px"><span style="left:8.5px;letter-spacing:-0.042px">Общие</span></div><div class="tab sel" style="left:79px;top:55px;width:170px;height:31px"><span style="left:9.799999999999955px;letter-spacing:0.168px">Входные параметры</span></div><div class="tab" style="left:248px;top:57px;width:60px;height:28px"><span style="left:7px;letter-spacing:0.035px">Цвета</span></div><div class="tab" style="left:307px;top:57px;width:118px;height:28px"><span style="left:9.299999999999955px;letter-spacing:0.267px">Отображение</span></div>
<div id="list"><div class="hd"><span class="h1" style="letter-spacing:-0.123px">Переменная</span><span class="h2" style="letter-spacing:0.17px">Значение</span></div>
<div class="row g"><svg width="25" height="26" viewBox="0 0 25 26"><path d="M0.5 0.5H17.5L23.5 6.5V24.5H0.5Z" fill="url(#gAb)" stroke="#e2c232"/><path d="M17.5 0.5V6.5H23.5Z" fill="#fdf3b0"/><text x="5" y="17" font-size="11.5" font-weight="bold" fill="#a07c0c" textLength="12.5" lengthAdjust="spacingAndGlyphs">ab</text></svg>
<span class="n" style="letter-spacing:0.129px">BufferCurrency</span><span class="v" style="letter-spacing:-0.766px">EUR</span></div>
<div class="row"><svg width="25" height="26" viewBox="0 0 25 26"><path d="M0.5 0.5H17.5L23.5 6.5V24.5H0.5Z" fill="url(#gAb)" stroke="#e2c232"/><path d="M17.5 0.5V6.5H23.5Z" fill="#fdf3b0"/><text x="5" y="17" font-size="11.5" font-weight="bold" fill="#a07c0c" textLength="12.5" lengthAdjust="spacingAndGlyphs">ab</text></svg>
<span class="n" style="letter-spacing:0.024px">ShowRatio</span><span class="v" style="letter-spacing:-0.123px">EUR,GBP,AUD,NZD,USD,CAD,CHF,JPY</span></div>
<div class="row g"><svg width="25" height="26" viewBox="0 0 25 26"><path d="M0.5 0.5H17.5L23.5 6.5V24.5H0.5Z" fill="url(#gAb)" stroke="#e2c232"/><path d="M17.5 0.5V6.5H23.5Z" fill="#fdf3b0"/><text x="5" y="17" font-size="11.5" font-weight="bold" fill="#a07c0c" textLength="12.5" lengthAdjust="spacingAndGlyphs">ab</text></svg>
<span class="n" style="letter-spacing:-0.333px">UsePairs</span><span class="v" style="letter-spacing:-0.276px">EURUSD,EURGBP,EURCHF,EURJPY,EURAU...</span></div>
<div class="row"><svg width="25" height="26" viewBox="0 0 25 26"><path d="M0.5 0.5H17.5L23.5 6.5V24.5H0.5Z" fill="url(#gAb)" stroke="#e2c232"/><path d="M17.5 0.5V6.5H23.5Z" fill="#fdf3b0"/><text x="5" y="17" font-size="11.5" font-weight="bold" fill="#a07c0c" textLength="12.5" lengthAdjust="spacingAndGlyphs">ab</text></svg>
<span class="n" style="letter-spacing:0.138px">PairPreffix</span><span class="v" style="letter-spacing:0px">#</span></div>
<div class="row g"><svg width="25" height="26" viewBox="0 0 25 26"><path d="M0.5 0.5H17.5L23.5 6.5V24.5H0.5Z" fill="url(#gC)" stroke="#c4c4c4"/><path d="M17.5 0.5V6.5H23.5Z" fill="#f2f2f2" stroke="#c4c4c4" stroke-width="0.8"/><rect x="6.3" y="9.3" width="2.5" height="2.5" fill="#e02030"/><rect x="11.3" y="9.3" width="2.5" height="2.5" fill="#2038d0"/><rect x="15.8" y="9.3" width="2.5" height="2.5" fill="#209a60"/><rect x="6.3" y="14.3" width="2.5" height="2.5" fill="#8a7a60"/><rect x="11.3" y="14.3" width="2.5" height="2.5" fill="#2080c0"/><rect x="15.8" y="14.3" width="2.5" height="2.5" fill="#f09020"/></svg>
<span class="n" style="letter-spacing:0.082px">CurrencyClr</span><i class="sw" style="background:#00ff00"></i><span class="v c" style="letter-spacing:0.061px">Lime</span></div>
<div class="row"><svg width="25" height="26" viewBox="0 0 25 26"><path d="M0.5 0.5H17.5L23.5 6.5V24.5H0.5Z" fill="url(#gBo)" stroke="#4cb42c"/><path d="M17.5 0.5V6.5H23.5Z" fill="#e4f8d8"/><path d="M7 19.5V9M4.4 10.5L7 6.5L9.6 10.5ZM7 19.5C8.5 15 10.5 13.5 15.5 13.5M14.5 10.8L18.5 13.5L14.5 16.2Z" stroke="#1c8a1c" stroke-width="1.5" fill="#1c8a1c" stroke-linejoin="round"/></svg>
<span class="n" style="letter-spacing:0.074px">ShowNameShadow</span><span class="v" style="letter-spacing:0.36px">true</span></div>
<div class="row g"><svg width="25" height="26" viewBox="0 0 25 26"><path d="M0.5 0.5H17.5L23.5 6.5V24.5H0.5Z" fill="url(#gC)" stroke="#c4c4c4"/><path d="M17.5 0.5V6.5H23.5Z" fill="#f2f2f2" stroke="#c4c4c4" stroke-width="0.8"/><rect x="6.3" y="9.3" width="2.5" height="2.5" fill="#e02030"/><rect x="11.3" y="9.3" width="2.5" height="2.5" fill="#2038d0"/><rect x="15.8" y="9.3" width="2.5" height="2.5" fill="#209a60"/><rect x="6.3" y="14.3" width="2.5" height="2.5" fill="#8a7a60"/><rect x="11.3" y="14.3" width="2.5" height="2.5" fill="#2080c0"/><rect x="15.8" y="14.3" width="2.5" height="2.5" fill="#f09020"/></svg>
<span class="n" style="letter-spacing:0.096px">CurrencyShadowClr</span><i class="sw" style="background:#000000"></i><span class="v c" style="letter-spacing:-0.321px">Black</span></div>
<div class="row"><svg width="25" height="26" viewBox="0 0 25 26"><path d="M0.5 0.5H17.5L23.5 6.5V24.5H0.5Z" fill="url(#gC)" stroke="#c4c4c4"/><path d="M17.5 0.5V6.5H23.5Z" fill="#f2f2f2" stroke="#c4c4c4" stroke-width="0.8"/><rect x="6.3" y="9.3" width="2.5" height="2.5" fill="#e02030"/><rect x="11.3" y="9.3" width="2.5" height="2.5" fill="#2038d0"/><rect x="15.8" y="9.3" width="2.5" height="2.5" fill="#209a60"/><rect x="6.3" y="14.3" width="2.5" height="2.5" fill="#8a7a60"/><rect x="11.3" y="14.3" width="2.5" height="2.5" fill="#2080c0"/><rect x="15.8" y="14.3" width="2.5" height="2.5" fill="#f09020"/></svg>
<span class="n" style="letter-spacing:0.004px">DayRatioClr</span><i class="sw" style="background:#4169e1"></i><span class="v c" style="letter-spacing:-0.159px">RoyalBlue</span></div>
<div class="row g"><svg width="25" height="26" viewBox="0 0 25 26"><path d="M0.5 0.5H17.5L23.5 6.5V24.5H0.5Z" fill="url(#gC)" stroke="#c4c4c4"/><path d="M17.5 0.5V6.5H23.5Z" fill="#f2f2f2" stroke="#c4c4c4" stroke-width="0.8"/><rect x="6.3" y="9.3" width="2.5" height="2.5" fill="#e02030"/><rect x="11.3" y="9.3" width="2.5" height="2.5" fill="#2038d0"/><rect x="15.8" y="9.3" width="2.5" height="2.5" fill="#209a60"/><rect x="6.3" y="14.3" width="2.5" height="2.5" fill="#8a7a60"/><rect x="11.3" y="14.3" width="2.5" height="2.5" fill="#2080c0"/><rect x="15.8" y="14.3" width="2.5" height="2.5" fill="#f09020"/></svg>
<span class="n" style="letter-spacing:0.103px">HoursRatioClr</span><i class="sw" style="background:#ff4500"></i><span class="v c" style="letter-spacing:-0.088px">OrangeRed</span></div>
<div class="row"><svg width="25" height="26" viewBox="0 0 25 26"><path d="M0.5 0.5H17.5L23.5 6.5V24.5H0.5Z" fill="url(#gC)" stroke="#c4c4c4"/><path d="M17.5 0.5V6.5H23.5Z" fill="#f2f2f2" stroke="#c4c4c4" stroke-width="0.8"/><rect x="6.3" y="9.3" width="2.5" height="2.5" fill="#e02030"/><rect x="11.3" y="9.3" width="2.5" height="2.5" fill="#2038d0"/><rect x="15.8" y="9.3" width="2.5" height="2.5" fill="#209a60"/><rect x="6.3" y="14.3" width="2.5" height="2.5" fill="#8a7a60"/><rect x="11.3" y="14.3" width="2.5" height="2.5" fill="#2080c0"/><rect x="15.8" y="14.3" width="2.5" height="2.5" fill="#f09020"/></svg>
<span class="n" style="letter-spacing:-0.216px">BackRastrClr</span><i class="sw" style="background:#000000"></i><span class="v c" style="letter-spacing:-0.321px">Black</span></div>
<div class="row g"><svg width="25" height="26" viewBox="0 0 25 26"><path d="M0.5 0.5H17.5L23.5 6.5V24.5H0.5Z" fill="url(#gBo)" stroke="#4cb42c"/><path d="M17.5 0.5V6.5H23.5Z" fill="#e4f8d8"/><path d="M7 19.5V9M4.4 10.5L7 6.5L9.6 10.5ZM7 19.5C8.5 15 10.5 13.5 15.5 13.5M14.5 10.8L18.5 13.5L14.5 16.2Z" stroke="#1c8a1c" stroke-width="1.5" fill="#1c8a1c" stroke-linejoin="round"/></svg>
<span class="n" style="letter-spacing:-0.103px">UseDayRangeCalculation</span><span class="v" style="letter-spacing:0.36px">true</span></div>
<div class="row"><svg width="25" height="26" viewBox="0 0 25 26"><path d="M0.5 0.5H17.5L23.5 6.5V24.5H0.5Z" fill="url(#gBo)" stroke="#4cb42c"/><path d="M17.5 0.5V6.5H23.5Z" fill="#e4f8d8"/><path d="M7 19.5V9M4.4 10.5L7 6.5L9.6 10.5ZM7 19.5C8.5 15 10.5 13.5 15.5 13.5M14.5 10.8L18.5 13.5L14.5 16.2Z" stroke="#1c8a1c" stroke-width="1.5" fill="#1c8a1c" stroke-linejoin="round"/></svg>
<span class="n" style="letter-spacing:0.252px">ShowWarningComments</span><span class="v" style="letter-spacing:0.36px">true</span></div>
<div class="row g"><svg width="25" height="26" viewBox="0 0 25 26"><path d="M0.5 0.5H17.5L23.5 6.5V24.5H0.5Z" fill="url(#gI)" stroke="#5cacec"/><path d="M17.5 0.5V6.5H23.5Z" fill="#e4f2fc"/><text x="1.9" y="18.2" font-size="14" font-weight="bold" fill="#2a62cc" textLength="19.8" lengthAdjust="spacingAndGlyphs">123</text></svg>
<span class="n" style="letter-spacing:-0.002px">ShiftX</span><span class="v" style="letter-spacing:0px">20</span></div>
<div class="row"><svg width="25" height="26" viewBox="0 0 25 26"><path d="M0.5 0.5H17.5L23.5 6.5V24.5H0.5Z" fill="url(#gI)" stroke="#5cacec"/><path d="M17.5 0.5V6.5H23.5Z" fill="#e4f2fc"/><text x="1.9" y="18.2" font-size="14" font-weight="bold" fill="#2a62cc" textLength="19.8" lengthAdjust="spacingAndGlyphs">123</text></svg>
<span class="n" style="letter-spacing:-0.152px">ShiftY</span><span class="v" style="letter-spacing:0px">300</span></div>
<div class="row g"><svg width="25" height="26" viewBox="0 0 25 26"><path d="M0.5 0.5H17.5L23.5 6.5V24.5H0.5Z" fill="url(#gI)" stroke="#5cacec"/><path d="M17.5 0.5V6.5H23.5Z" fill="#e4f2fc"/><text x="2.4" y="13.5" font-size="13" font-weight="bold" fill="#2a62cc">1</text><path d="M8.3 18.6L13.6 6.4" stroke="#2a62cc" stroke-width="1.8"/><text x="12.6" y="19" font-size="13" font-weight="bold" fill="#2a62cc">2</text></svg>
<span class="n" style="letter-spacing:0.389px">Horizontal imul</span><span class="v" style="letter-spacing:0px">2</span></div>
<div class="row"><svg width="25" height="26" viewBox="0 0 25 26"><path d="M0.5 0.5H17.5L23.5 6.5V24.5H0.5Z" fill="url(#gI)" stroke="#5cacec"/><path d="M17.5 0.5V6.5H23.5Z" fill="#e4f2fc"/><text x="2.4" y="13.5" font-size="13" font-weight="bold" fill="#2a62cc">1</text><path d="M8.3 18.6L13.6 6.4" stroke="#2a62cc" stroke-width="1.8"/><text x="12.6" y="19" font-size="13" font-weight="bold" fill="#2a62cc">2</text></svg>
<span class="n" style="letter-spacing:0.364px">Vertical imul</span><span class="v" style="letter-spacing:0px">2</span></div>
<div class="row g"><svg width="25" height="26" viewBox="0 0 25 26"><path d="M0.5 0.5H17.5L23.5 6.5V24.5H0.5Z" fill="url(#gI)" stroke="#5cacec"/><path d="M17.5 0.5V6.5H23.5Z" fill="#e4f2fc"/><text x="1.9" y="18.2" font-size="14" font-weight="bold" fill="#2a62cc" textLength="19.8" lengthAdjust="spacingAndGlyphs">123</text></svg>
<span class="n" style="letter-spacing:0.029px">Scale shift</span><span class="v" style="letter-spacing:0px">0</span></div>
<div id="sb"><svg width="25" height="26" viewBox="0 0 25 26"><path d="M7.6 19L12.5 14L17.4 19" stroke="#585858" stroke-width="2.8" fill="none"/></svg><div id="thumb"></div><svg style="position:absolute;left:0;bottom:0" width="25" height="26" viewBox="0 0 25 26"><path d="M7.6 9.3L12.5 14.3L17.4 9.3" stroke="#585858" stroke-width="2.8" fill="none"/></svg></div></div>
<div class="btn" style="left:735px;top:575px;width:156px;height:31px"><span style="letter-spacing:0.338px">Загрузить</span></div><div class="btn" style="left:735px;top:620px;width:156px;height:31px"><span style="letter-spacing:0.12px">Сохранить</span></div><div class="btn def" style="left:553px;top:684px;width:111px;height:31px"><span style="letter-spacing:-0.305px">OK</span></div><div class="btn" style="left:672px;top:684px;width:111px;height:31px"><span style="letter-spacing:-0.082px">Отмена</span></div><div class="btn" style="left:791px;top:684px;width:111px;height:31px"><span style="letter-spacing:-0.197px">Сброс</span></div><svg id="grip" width="12" height="12" viewBox="0 0 12 12" shape-rendering="crispEdges"><g fill="#b8b8b8"><rect x="9" y="0" width="2" height="2"/><rect x="6" y="3" width="2" height="2"/><rect x="9" y="3" width="2" height="2"/><rect x="3" y="6" width="2" height="2"/><rect x="6" y="6" width="2" height="2"/><rect x="9" y="6" width="2" height="2"/><rect x="0" y="9" width="2" height="2"/><rect x="3" y="9" width="2" height="2"/><rect x="6" y="9" width="2" height="2"/><rect x="9" y="9" width="2" height="2"/></g></svg></div>
</body></html>
